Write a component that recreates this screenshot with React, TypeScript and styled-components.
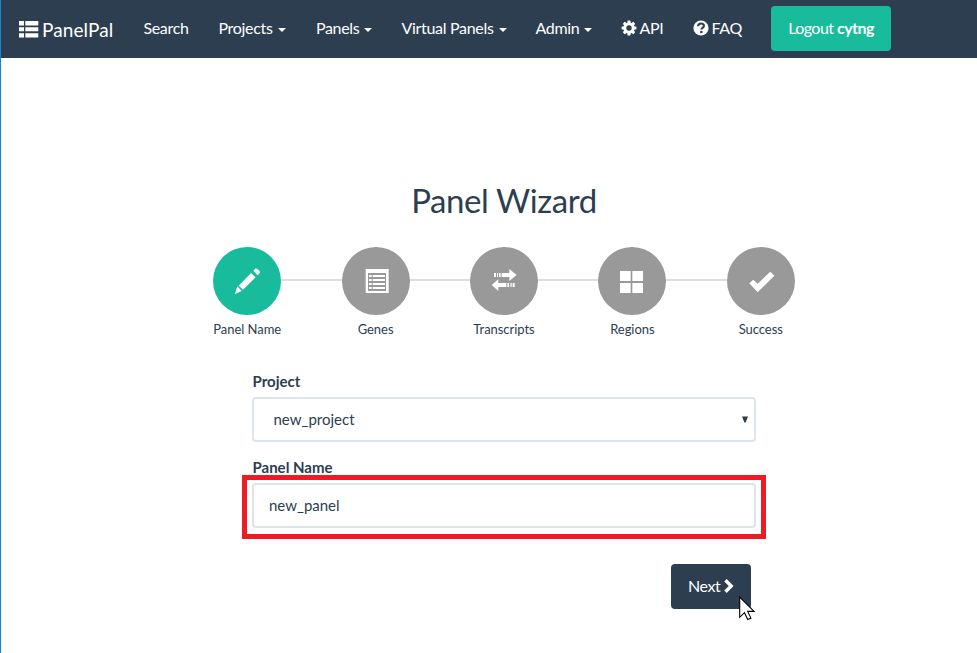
import React from "react";
import styled, { createGlobalStyle, css } from "styled-components";

const GlobalStyle = createGlobalStyle`
  * { box-sizing: border-box; }
  body {
    margin: 0;
    background: #fff;
    color: #2c3e50;
    font: 15px/21px Lato, "Liberation Sans", sans-serif;
  }
`;

const Page = styled.div`
  height: 653px;
  overflow: hidden;
  border-left: 1px solid #1a82d8;
`;

const Navbar = styled.nav`
  display: flex;
  height: 58px;
  padding-left: 17px;
  background: #2c3e50;
  color: #fff;
`;

const Brand = styled.a`
  display: flex;
  width: 125px;
  padding-top: 19px;
  font-size: 19px;
  letter-spacing: 0.1px;
  white-space: nowrap;
  svg { margin-right: 3px; }
`;

const NavItem = styled.a<{ $width: number }>`
  display: flex;
  align-items: center;
  width: ${(p) => p.$width}px;
  height: 55px;
  padding-left: 0.4px;
  font-size: 16px;
  letter-spacing: -0.3px;
  white-space: nowrap;
`;

const IconLabel = styled.span`
  margin-left: 2px;
`;

const Caret = styled.span`
  margin: 5px 0 0 5px;
  border: 4px solid transparent;
  border-top-color: #fff;
  border-bottom: 0;
`;

const button = css`
  display: flex;
  align-items: center;
  justify-content: center;
  height: 45px;
  padding: 0 0 2px;
  border: 0;
  border-radius: 4px;
  color: #fff;
  font: 16px/22px Lato, "Liberation Sans", sans-serif;
  white-space: pre;
`;

const Logout = styled.button`
  ${button}
  width: 120px;
  margin-top: 6px;
  letter-spacing: -0.55px;
  background: #18bc9c;
`;

const Title = styled.h1`
  margin: 121px 0 0;
  padding-left: 30px;
  font-size: 33px;
  font-weight: 400;
  letter-spacing: -0.4px;
  line-height: 42px;
  text-align: center;
`;

const Steps = styled.ol`
  display: flex;
  margin: 26px 0 0 182px;
  padding: 0;
  list-style: none;
`;

const Step = styled.li`
  width: 128.4px;
  text-align: center;
  font-size: 13px;
  letter-spacing: -0.05px;
  line-height: 18px;
`;

const StepTrack = styled.div<{ $first?: boolean; $last?: boolean }>`
  display: flex;
  align-items: center;
  &::before,
  &::after {
    content: "";
    flex: 1;
    height: 2px;
    margin-bottom: 2px;
    background: #ddd;
  }
  ${(p) => p.$first && css`&::before { visibility: hidden; }`}
  ${(p) => p.$last && css`&::after { visibility: hidden; }`}
`;

const Circle = styled.div<{ $active?: boolean }>`
  width: 68px;
  height: 68px;
  border-radius: 50%;
  background: ${(p) => (p.$active ? "#18bc9c" : "#999")};
  svg { display: block; width: 68px; height: 68px; }
`;

const StepLabel = styled.div`
  margin-top: 5px;
`;

const Form = styled.form`
  width: 504px;
  margin: 33px 0 0 251px;
`;

const Field = styled.div`
  position: relative;
  margin-bottom: 15px;
`;

const Label = styled.label`
  display: block;
  height: 26px;
  padding-left: 0.5px;
  font-weight: 700;
`;

const Control = styled.div<{ $inset: number }>`
  display: flex;
  align-items: center;
  justify-content: space-between;
  height: 45px;
  padding: 0 6px 1px ${(p) => p.$inset}px;
  border: 2px solid #dce4ec;
  border-radius: 4px;
`;

const Highlight = styled.div`
  position: absolute;
  inset: 18px -10px -11px;
  border: 5px solid #ed1c24;
`;

const Next = styled.button`
  ${button}
  position: relative;
  width: 80px;
  margin: 36px 0 0 419px;
  letter-spacing: -0.4px;
  background: #2c3e50;
`;

const Cursor = styled.svg`
  position: absolute;
  left: 68px;
  top: 32px;
`;

const menus = [
  { label: "Search", width: 75 },
  { label: "Projects", width: 97.5, caret: true },
  { label: "Panels", width: 85.5, caret: true },
  { label: "Virtual Panels", width: 134, caret: true },
  { label: "Admin", width: 86, caret: true },
];

const steps = [
  {
    label: "Panel Name",
    box: "39 231 204 204",
    icon: <path d="M153 309l14 13-38 37-13-12zM160 302l7-7q13 5 13 13l-7 8zM105 372l7-23 13 14z" />,
  },
  {
    label: "Genes",
    box: "426 231 204 204",
    icon: (
      <>
        <path fillRule="evenodd" d="M497 297h69v72h-69zM504 309v54h54v-54z" />
        {[315, 327, 339, 351].map((y) => (
          <path key={y} d={`M507 ${y}h8v6h-8zM518 ${y}h37v6h-37z`} />
        ))}
      </>
    ),
  },
  {
    label: "Transcripts",
    box: "210 231 204 204",
    icon: (
      <path d="M282 309h6v12h-6zM291 309h3v12h-3zM297 309h5v12h-5zM305 309h23v-12l22 18-22 18v-12h-23zM344 339h-6v12h6zM335 339h-4v12h4zM327 339h-5v12h5zM319 339h-24v-11l-20 17 20 18v-12h24z" />
    ),
  },
  {
    label: "Regions",
    box: "24 51 204 204",
    icon: <path d="M90 123h32v30H90zM127 123h32v30h-32zM90 159h32v30H90zM127 159h32v30h-32z" />,
  },
  {
    label: "Success",
    box: "411 51 204 204",
    icon: <path d="M478 160l12-11 13 12 38-36 12 12-50 50z" />,
  },
];

const ListIcon = () => (
  <svg width="21" height="20" viewBox="0 0 21 20" fill="#fff">
    <path d="M1 2h5v4.4H1zM7.3 2h13v4.4h-13zM1 8.2h5v4.1H1zM7.3 8.2h13v4.1h-13zM1 14.2h5v4.4H1zM7.3 14.2h13v4.4h-13z" />
  </svg>
);

const CogIcon = () => (
  <svg width="16" height="16" viewBox="-8 -8 16 16" fill="#fff">
    <g>
      {[0, 45, 90, 135].map((a) => (
        <path key={a} transform={`rotate(${a})`} d="M-1.3-7.4h2.6L2-4v8L1.3 7.4h-2.6L-2 4v-8z" />
      ))}
      <circle r="5.5" />
    </g>
    <circle r="2.7" fill="#2c3e50" />
  </svg>
);

const QuestionIcon = () => (
  <svg width="16" height="16" viewBox="0 0 16 16">
    <circle cx="8" cy="8" r="7.6" fill="#fff" />
    <path d="M5.1 6.2C5.2 2.7 11 2.6 11 5.8 11 8 8.4 7.8 8.4 9.6" fill="none" stroke="#2c3e50" strokeWidth="2.1" />
    <path d="M7.2 10.9h2.3v2.2H7.2z" fill="#2c3e50" />
  </svg>
);

export default function App() {
  return (
    <Page>
      <GlobalStyle />
      <Navbar>
        <Brand>
          <ListIcon />
          PanelPal
        </Brand>
        {menus.map((m) => (
          <NavItem key={m.label} $width={m.width}>
            {m.label}
            {m.caret && <Caret />}
          </NavItem>
        ))}
        <NavItem $width={72}>
          <CogIcon />
          <IconLabel>API</IconLabel>
        </NavItem>
        <NavItem $width={78}>
          <QuestionIcon />
          <IconLabel>FAQ</IconLabel>
        </NavItem>
        <Logout>
          Logout <b>cytng</b>
        </Logout>
      </Navbar>
      <Title>Panel Wizard</Title>
      <Steps>
        {steps.map((s, i) => (
          <Step key={s.label}>
            <StepTrack $first={i === 0} $last={i === steps.length - 1}>
              <Circle $active={i === 0}>
                <svg viewBox={s.box} fill="#fff">{s.icon}</svg>
              </Circle>
            </StepTrack>
            <StepLabel>{s.label}</StepLabel>
          </Step>
        ))}
      </Steps>
      <Form>
        <Field>
          <Label>Project</Label>
          <Control $inset={19.5}>
            new_project
            <svg width="6" height="7" viewBox="0 0 6 7" fill="#2c3e50">
              <path d="M0 .5h6L3.6 6.5H2.4z" />
            </svg>
          </Control>
        </Field>
        <Field>
          <Label>Panel Name</Label>
          <Control $inset={15}>new_panel</Control>
          <Highlight />
        </Field>
        <Next type="button">
          Next{" "}
          <svg width="10" height="14" viewBox="0 0 10 14" fill="none" stroke="#fff" strokeWidth="3.4">
            <path d="M1.5 1.2L7.2 7l-5.7 5.8" />
          </svg>
          <Cursor width="18" height="25" viewBox="0 0 18 25">
            <path d="M.7 1v20.3l4.8-4.6 3.2 6.8 3.2-1.4-3.2-6.7h6.4z" fill="#fff" stroke="#000" strokeWidth="1.1" />
          </Cursor>
        </Next>
      </Form>
    </Page>
  );
}
